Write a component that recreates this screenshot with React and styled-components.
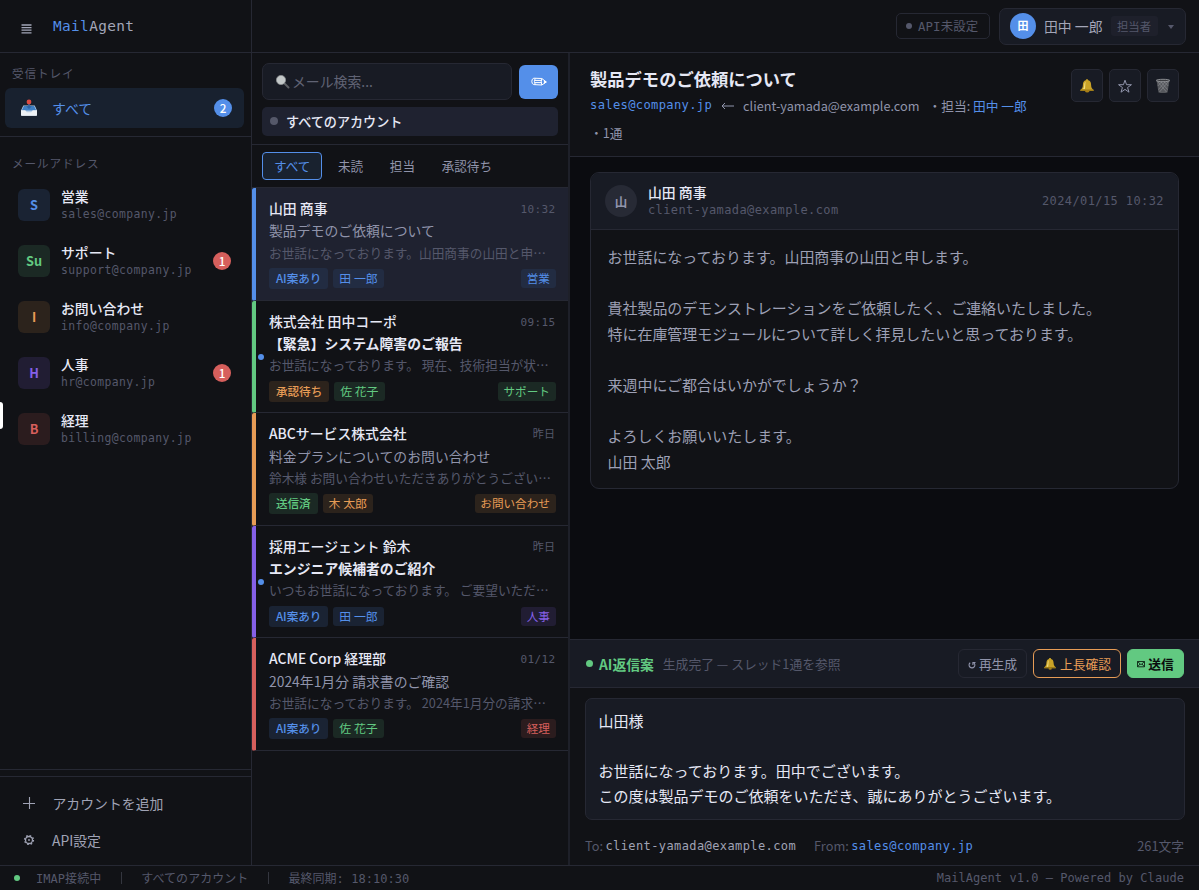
import React from 'react';
import styled, { createGlobalStyle, css } from 'styled-components';

const c = {
  bg: '#0b0c10',
  surface: '#111216',
  raised: '#181b24',
  active: '#1f2230',
  line: '#262833',
  text: '#e6e8f5',
  soft: '#9094ab',
  dim: '#55586b',
  blue: '#548fe9',
  green: '#62c981',
  orange: '#e79c56',
  purple: '#8560e8',
  red: '#d65f5c',
};

const tint = {
  blue: { fg: c.blue, bg: '#1a2333' },
  green: { fg: c.green, bg: '#1b2924' },
  orange: { fg: c.orange, bg: '#2c231c' },
  purple: { fg: c.purple, bg: '#211d33' },
  red: { fg: c.red, bg: '#2b1c1e' },
};

const Global = createGlobalStyle`
  * { box-sizing: border-box; }
  html, body { margin: 0; height: 100%; background: ${c.bg}; }
  body { font-family: "Noto Sans CJK JP", "Noto Sans", sans-serif; color: ${c.text}; overflow: hidden; font-size: 13.86px; }
  button { font: inherit; color: inherit; margin: 0; padding: 0; border: 0; background: none; }
`;

const mono = css`
  font-family: "DejaVu Sans Mono", "Noto Sans CJK JP", monospace;
  letter-spacing: ${(p) => p.$ls ?? 0.4}px;
`;

const Shell = styled.div`
  width: 1199px;
  height: 890px;
  display: grid;
  grid-template-rows: 53px 812px 25px;
  position: relative;
  background: ${c.surface};
  white-space: nowrap;
`;

const EdgeHandle = styled.div`
  position: absolute;
  left: 0;
  top: 402px;
  width: 3px;
  height: 27px;
  background: #fff;
  border-radius: 0 3px 3px 0;
`;

/* top bar */
const TopBar = styled.header`
  display: flex;
  align-items: stretch;
  border-bottom: 1px solid ${c.line};
`;
const Brand = styled.div`
  width: 252px;
  border-right: 1px solid ${c.line};
  display: flex;
  align-items: center;
  padding-left: 21px;
`;
const MenuIcon = styled.svg`
  width: 11px;
  height: 10px;
  margin-top: 5px;
`;
const Logo = styled.div`
  ${mono}
  font-size: 14.4px;
  line-height: 20px;
  margin-left: 21px;
  color: #a3a6b8;
  span { color: ${c.blue}; }
`;
const TopActions = styled.div`
  flex: 1;
  display: flex;
  align-items: center;
  justify-content: flex-end;
  gap: 9px;
  padding-right: 13px;
`;
const ApiBadge = styled.div`
  ${mono}
  display: flex;
  align-items: center;
  gap: 6px;
  width: 94px;
  height: 26px;
  padding-left: 9px;
  border: 1px solid ${c.line};
  border-radius: 5px;
  font-size: 12.4px;
  color: ${c.dim};
`;
const Dot = styled.i`
  flex: none;
  display: block;
  width: ${(p) => p.$s}px;
  height: ${(p) => p.$s}px;
  border-radius: 50%;
  background: ${(p) => p.$c};
`;
const UserMenu = styled.button`
  display: flex;
  align-items: center;
  width: 187px;
  height: 37px;
  padding: 0 10px;
  border: 1px solid ${c.line};
  border-radius: 7px;
  background: ${c.raised};
`;
const UserAvatar = styled.span`
  width: 26px;
  height: 26px;
  border-radius: 50%;
  background: ${c.blue};
  color: #fff;
  font-size: 11px;
  font-weight: 700;
  line-height: 25px;
  text-align: center;
`;
const UserName = styled.span`
  margin-left: 8px;
  color: #a3a6b8;
`;
const Role = styled.span`
  margin-left: 8px;
  width: 47px;
  height: 20px;
  line-height: 20px;
  text-align: center;
  border-radius: 3px;
  background: #1e202b;
  color: ${c.dim};
  font-size: 11.4px;
`;
const Caret = styled.i`
  margin-left: 10px;
  border: 3.5px solid transparent;
  border-top: 4px solid ${c.dim};
  border-bottom: 0;
  margin-top: 2px;
`;

const Main = styled.div`
  display: grid;
  grid-template-columns: 252px 318px 629px;
  min-height: 0;
`;

/* sidebar */
const Sidebar = styled.nav`
  border-right: 1px solid ${c.line};
  display: flex;
  flex-direction: column;
`;
const InboxGroup = styled.div`
  height: 84px;
  padding: 10px 7px 0 5px;
  border-bottom: 1px solid ${c.line};
`;
const GroupLabel = styled.div`
  font-size: 11.6px;
  line-height: 20px;
  letter-spacing: 0.9px;
  color: ${c.dim};
  padding-left: 7px;
`;
const InboxItem = styled.div`
  display: flex;
  align-items: center;
  height: 40px;
  margin-top: 5px;
  padding: 0 12px 0 15px;
  border-radius: 6px;
  background: #18212f;
  color: ${c.blue};
  svg { width: 18px; height: 18px; }
  span { margin-left: 14px; flex: 1; }
`;
const Count = styled.b`
  width: 18px;
  height: 18px;
  border-radius: 9px;
  background: ${(p) => p.$c};
  color: #fff;
  font-size: 11.7px;
  font-weight: 500;
  line-height: 17px;
  text-align: center;
`;
const Accounts = styled.div`
  flex: 1;
  padding: 16px 5px 0;
`;
const Account = styled.div`
  display: flex;
  align-items: center;
  height: 56px;
  padding: 0 15px 0 13px;
`;
const AccountList = styled.div`
  margin-top: 4px;
`;
const Tile = styled.span`
  width: 32px;
  height: 32px;
  border-radius: 6px;
  background: ${(p) => tint[p.$t].bg};
  color: ${(p) => tint[p.$t].fg};
  font-size: 12.75px;
  font-weight: 700;
  line-height: 32px;
  text-align: center;
`;
const AccountText = styled.div`
  flex: 1;
  margin-left: 11px;
  font-weight: 500;
  line-height: 17px;
`;
const Address = styled.div`
  ${mono}
  font-weight: 400;
  font-size: ${(p) => p.$fs ?? 11.4}px;
  line-height: 16px;
  padding-top: 1px;
  color: ${c.dim};
`;
const SideFooter = styled.div`
  height: 96px;
  border-top: 1px solid ${c.line};
  padding-top: 6px;
`;
const FooterInner = styled.div`
  border-top: 1px solid ${c.line};
  padding-top: 7px;
`;
const FooterLink = styled.div`
  display: flex;
  align-items: center;
  height: 37px;
  padding-left: 22px;
  color: #a0a3b5;
  svg { width: 14px; height: 14px; margin-right: ${(p) => p.$gap}px; }
`;

/* message list */
const ListPane = styled.section`
  border-right: 2px solid #1e2029;
`;
const SearchArea = styled.div`
  height: 92px;
  padding: 10px 10px 0;
  border-bottom: 1px solid ${c.line};
`;
const SearchRow = styled.div`
  display: flex;
  align-items: center;
  gap: 7px;
`;
const Search = styled.div`
  width: 250px;
  height: 37px;
  display: flex;
  align-items: center;
  padding: 0 0 1px 12px;
  border: 1px solid ${c.line};
  border-radius: 7px;
  background: ${c.raised};
  color: #606374;
  svg { width: 15px; height: 15px; margin-right: 2px; }
`;
const Compose = styled.button`
  width: 39px;
  height: 34px;
  border-radius: 6px;
  background: ${c.blue};
  display: grid;
  place-items: center;
  svg { width: 16px; height: 12px; }
`;
const AccountFilter = styled.div`
  display: flex;
  align-items: center;
  gap: 8px;
  height: 29px;
  width: 296px;
  margin-top: 7px;
  padding: 0 0 1px 8px;
  border-radius: 5px;
  background: ${c.active};
  font-size: 13.1px;
  font-weight: 500;
`;
const Tabs = styled.div`
  display: flex;
  align-items: center;
  height: 43px;
  padding-left: 10px;
  border-bottom: 1px solid ${c.line};
`;
const Tab = styled.button`
  height: 28px;
  line-height: 23px;
  padding: 0 ${(p) => (p.$on ? 11 : 12)}px 2px;
  margin-right: ${(p) => (p.$on ? 2.5 : 0.7)}px;
  border-radius: 4px;
  font-size: 12.6px;
  color: ${(p) => (p.$on ? c.blue : c.soft)};
  border: 1px solid ${(p) => (p.$on ? c.blue : 'transparent')};
  background: ${(p) => (p.$on ? '#19222f' : 'none')};
`;
const Mail = styled.article`
  position: relative;
  height: 112.6px;
  padding: 10px 12.5px 0 13px;
  border-left: 4px solid ${(p) => tint[p.$t].fg};
  border-bottom: 1px solid ${c.line};
  border-radius: 2px 0 0 2px;
  background: ${(p) => (p.$on ? c.active : 'none')};
`;
const UnreadDot = styled.i`
  position: absolute;
  left: 2px;
  top: 53px;
  width: 6px;
  height: 6px;
  border-radius: 50%;
  background: ${c.blue};
`;
const MailTop = styled.div`
  display: flex;
  justify-content: space-between;
  line-height: 21.4px;
  font-weight: 500;
`;
const MailTime = styled.time`
  ${mono}
  font-size: 11px;
  line-height: 23px;
  height: 21.4px;
  font-weight: 400;
  color: ${c.dim};
`;
const Subject = styled.div`
  line-height: 23.2px;
  color: ${(p) => (p.$unread ? c.text : c.soft)};
  font-weight: ${(p) => (p.$unread ? 700 : 400)};
`;
const Preview = styled.div`
  font-size: 12.7px;
  line-height: 20px;
  color: ${c.dim};
`;
const Tags = styled.div`
  display: flex;
  align-items: center;
  gap: 5px;
  margin-top: 5.4px;
`;
const Tag = styled.span`
  height: ${(p) => (p.$strong ? 21 : 19)}px;
  line-height: ${(p) => (p.$strong ? 20 : 18)}px;
  padding: 0 ${(p) => (p.$end ? 5.6 : p.$strong ? 6.9 : 6)}px;
  border-radius: 3px;
  font-size: ${(p) => (p.$strong ? 11.6 : p.$end ? 11.6 : 11.9)}px;
  font-weight: ${(p) => (p.$strong ? 500 : 400)};
  color: ${(p) => tint[p.$t].fg};
  background: ${(p) => (p.$lit ? '#222c42' : tint[p.$t].bg)};
  margin-left: ${(p) => (p.$end ? 'auto' : 0)};
`;

/* reading pane */
const Reader = styled.section`
  display: flex;
  flex-direction: column;
  background: ${c.bg};
`;
const ReaderHead = styled.div`
  display: flex;
  justify-content: space-between;
  height: 104px;
  padding: 12px 20px 0 20px;
  background: ${c.surface};
  border-bottom: 1px solid ${c.line};
`;
const Title = styled.h1`
  margin: 0;
  font-size: 17.3px;
  line-height: 27px;
  font-weight: 700;
`;
const Route = styled.div`
  display: flex;
  align-items: center;
  font-size: 12.72px;
  line-height: 27px;
  color: ${c.soft};
  b { font-weight: 400; color: ${c.blue}; }
`;
const RouteFrom = styled.span`
  ${mono}
  font-size: 12.1px;
  color: ${c.blue};
`;
const Arrow = styled.svg`
  width: 13px;
  height: 8px;
  margin: 0 9px;
`;
const Assignee = styled.span`
  margin-left: 9px;
`;
const HeadButtons = styled.div`
  display: flex;
  gap: 6px;
  padding-top: 4px;
`;
const IconButton = styled.button`
  width: 32px;
  height: 33px;
  border: 1px solid ${c.line};
  border-radius: 5px;
  background: ${c.raised};
  display: grid;
  place-items: center;
  svg { width: 16px; height: 16px; }
`;
const Thread = styled.div`
  flex: 1;
  padding: 15px 20px;
`;
const Card = styled.div`
  width: 589px;
  height: 317px;
  border: 1px solid ${c.line};
  border-radius: 9px;
  background: ${c.surface};
  overflow: hidden;
`;
const CardHead = styled.div`
  display: flex;
  align-items: center;
  height: 57px;
  padding: 0 14px;
  background: ${c.raised};
  border-bottom: 1px solid ${c.line};
`;
const Round = styled.span`
  width: 32px;
  height: 32px;
  border-radius: 50%;
  background: #272a35;
  color: ${c.soft};
  font-size: 12.5px;
  font-weight: 700;
  line-height: 33px;
  text-align: center;
`;
const Stamp = styled.time`
  ${mono}
  font-size: 12px;
  color: ${c.dim};
`;
const Body = styled.div`
  padding: 14px 16.5px;
  font-size: 14.98px;
  line-height: 25.6px;
  color: #9da0b5;
  white-space: pre;
`;

/* reply composer */
const Composer = styled.div`
  height: 226px;
  background: ${c.surface};
  border-top: 1px solid ${c.line};
`;
const ComposerHead = styled.div`
  display: flex;
  align-items: center;
  height: 48px;
  padding: 0 15px 0 16px;
  background: ${c.raised};
  border-bottom: 1px solid ${c.line};
`;
const AiTitle = styled.b`
  margin-left: 6px;
  font-size: 13.8px;
  font-weight: 700;
  color: ${c.green};
`;
const AiState = styled.span`
  flex: 1;
  margin-left: 9px;
  font-size: 12.8px;
  color: ${c.dim};
`;
const Action = styled.button`
  display: flex;
  align-items: center;
  justify-content: center;
  gap: 3px;
  width: ${(p) => p.$w}px;
  height: 29px;
  margin-left: 6px;
  border-radius: 6px;
  font-size: 12.75px;
  font-weight: ${(p) => p.$weight ?? 400};
  color: ${(p) => p.$fg};
  border: 1px solid ${(p) => p.$line};
  background: ${(p) => p.$bg ?? 'transparent'};
`;
const Draft = styled.div`
  margin: 10px 14px 0 15px;
  height: 122px;
  padding: 9px 12.5px;
  border: 1px solid ${c.line};
  border-radius: 7px;
  background: ${c.raised};
  font-size: 15px;
  line-height: 25px;
  white-space: pre;
`;
const DraftMeta = styled.div`
  display: flex;
  align-items: center;
  margin-top: 14px;
  padding: 0 15px;
  line-height: 24px;
  font-size: 12.75px;
  color: ${c.dim};
`;
const MetaMail = styled.span`
  ${mono}
  font-size: 12px;
  margin: 0 18px 0 2.5px;
  color: ${(p) => p.$c};
`;
const Chars = styled.span`
  margin-left: auto;
`;

const StatusBar = styled.footer`
  ${mono}
  display: flex;
  align-items: center;
  border-top: 1px solid ${c.line};
  padding: 0 15px 1px 14px;
  font-size: 12px;
  color: ${c.dim};
`;
const StatusText = styled.span`
  &:first-of-type { margin-left: 16px; }
  &:last-of-type { margin-left: auto; }
`;
const Sep = styled.i`
  width: 1px;
  height: 12px;
  margin: 0 19.5px;
  background: #34363f;
`;

const Bell = () => (
  <svg viewBox="0 0 16 16">
    <path d="M8 1.2c.8 0 1.2.5 1.2 1.1 2 .5 2.8 2.2 2.9 4.4.1 2.500.6 3.600 2.300 5 .5.400.4 1.200-.3 1.200H1.900c-.7 0-.8-.8-.3-1.200 1.700-1.400 2.200-2.500 2.300-5 .1-2.200.9-3.900 2.900-4.400 0-.6.4-1.100 1.200-1.100z" fill="#c9a227" />
    <path d="M6.600 3.400c-1 .9-1.300 2.400-1.400 4-.1 1.400-.5 2.600-1.200 3.600h1.900c.5-1.900.2-5.400.7-7.600z" fill="#f1de84" />
    <path d="M1.500 12.200h13" stroke="#8f6f14" strokeWidth="1.100" />
    <ellipse cx="8.200" cy="13.300" rx="1.900" ry="1.300" fill="#a87f18" />
  </svg>
);
const Star = () => (
  <svg viewBox="0 0 16 16">
    <path d="M8 2.200l1.550 4.500h4.900l-3.900 2.850 1.450 4.650L8 11.400l-4 2.800 1.450-4.650-3.900-2.850h4.900z" fill="none" stroke={c.soft} strokeWidth="1" />
  </svg>
);
const Trash = () => (
  <svg viewBox="0 0 16 16">
    <path d="M1.500 2.200h13l-2 12.300q-4.500 1.200-9 0z" fill="#55575c" />
    <path d="M3 4l8.500 10M6 4l6.500 7.500M9.500 4l3.700 4M13 4L4.500 14M10 4l-6.500 7.500M6.500 4L2.800 8" stroke="#8d8f93" strokeWidth=".6" />
    <ellipse cx="8" cy="2.500" rx="6.800" ry="1.200" fill="#3b3c40" stroke="#a0a2a6" strokeWidth=".8" />
  </svg>
);
const Inbox = () => (
  <svg viewBox="0 0 18 18">
    <path d="M3.300 6.500h11.400l2.300 5v4.500q0 .8-.8.8H1.800q-.8 0-.8-.8v-4.500z" fill="#b9cfe6" />
    <path d="M3.800 7h10.400l2 4.500H1.800z" fill="#3f7fc4" />
    <path d="M1 11.300h4.200l1.600 2h4.400l1.600-2H17V16q0 .8-.8.8H1.800Q1 16.800 1 16z" fill="#eef1f5" />
    <path d="M8.200 3h1.600v4.200h2L9 10 6.200 7.200h2z" fill="#2d64a5" />
    <circle cx="9" cy="3" r="2.400" fill="#dc4a41" />
  </svg>
);
const Magnifier = () => (
  <svg viewBox="0 0 15 15">
    <path d="M9 9l4.500 4.500" stroke="#5d5f64" strokeWidth="2" strokeLinecap="round" />
    <circle cx="6" cy="6" r="4.600" fill="#c3c8c8" stroke="#8c8f92" strokeWidth=".8" />
  </svg>
);
const Pencil = () => (
  <svg viewBox="0 0 16 12" fill="none" stroke="#fff" strokeWidth="1" strokeLinejoin="round">
    <path d="M2.800 2.200L10.800 2.500 15.300 6 10.800 9 2.800 8.600Q.8 8 .8 5.400T2.800 2.200zM4.200 2.300Q2.600 5.400 4.200 8.600M4 4.400h6.600M4 6.600h6.600M10.800 2.500Q9.600 6 10.800 9" />
    <path d="M13.400 4.800L15.200 6l-1.800 1.200z" fill="#fff" />
  </svg>
);
const Plus = () => (
  <svg viewBox="0 0 14 14">
    <path d="M1 7.500h12M7.500 1v12" stroke="#a0a3b5" strokeWidth="1.100" />
  </svg>
);
const Gear = () => (
  <svg viewBox="0 0 14 14" fill="none" stroke="#a0a3b5">
    <circle cx="7" cy="7" r="3.500" strokeWidth="1.300" />
    <circle cx="7" cy="7" r="4.500" strokeWidth="1.200" strokeDasharray="1.700 1.834" />
    <circle cx="7" cy="7" r=".9" fill="#a0a3b5" stroke="none" />
  </svg>
);
const Redo = () => (
  <svg width="8" height="10" viewBox="0 0 8 10" fill="none" stroke={c.soft} strokeWidth="1.100">
    <path d="M2.200 3.700A2.900 2.900 0 1 0 5.600 3.600M4.900 6V3.500h2.600" />
  </svg>
);
const Envelope = () => (
  <svg width="8" height="8" viewBox="0 0 8 8" fill="none" stroke="#0d2415" strokeWidth=".9">
    <path d="M.5 1.500h7v5.300h-7zM.5 1.500L4 4.700l3.500-3.200M.5 6.800L3 4M7.500 6.800L5 4" />
  </svg>
);

const accounts = [
  ['S', 'blue', '営業', 'sales@company.jp'],
  ['Su', 'green', 'サポート', 'support@company.jp', 1],
  ['I', 'orange', 'お問い合わせ', 'info@company.jp'],
  ['H', 'purple', '人事', 'hr@company.jp', 1],
  ['B', 'red', '経理', 'billing@company.jp'],
];

const mails = [
  { t: 'blue', on: true, from: '山田 商事', time: '10:32', subject: '製品デモのご依頼について', preview: 'お世話になっております。山田商事の山田と申…', tags: [['AI案あり', 'blue'], ['田 一郎', 'blue'], ['営業', 'blue']] },
  { t: 'green', unread: true, from: '株式会社 田中コーポ', time: '09:15', subject: '【緊急】システム障害のご報告', preview: 'お世話になっております。 現在、技術担当が状…', tags: [['承認待ち', 'orange'], ['佐 花子', 'green'], ['サポート', 'green']] },
  { t: 'orange', from: 'ABCサービス株式会社', time: '昨日', subject: '料金プランについてのお問い合わせ', preview: '鈴木様 お問い合わせいただきありがとうござい…', tags: [['送信済', 'green'], ['木 太郎', 'orange'], ['お問い合わせ', 'orange']] },
  { t: 'purple', unread: true, from: '採用エージェント 鈴木', time: '昨日', subject: 'エンジニア候補者のご紹介', preview: 'いつもお世話になっております。 ご要望いただ…', tags: [['AI案あり', 'blue'], ['田 一郎', 'blue'], ['人事', 'purple']] },
  { t: 'red', from: 'ACME Corp 経理部', time: '01/12', subject: '2024年1月分 請求書のご確認', preview: 'お世話になっております。 2024年1月分の請求…', tags: [['AI案あり', 'blue'], ['佐 花子', 'green'], ['経理', 'red']] },
];

const message = `お世話になっております。山田商事の山田と申します。

貴社製品のデモンストレーションをご依頼したく、ご連絡いたしました。
特に在庫管理モジュールについて詳しく拝見したいと思っております。

来週中にご都合はいかがでしょうか？

よろしくお願いいたします。
山田 太郎`;

const draft = `山田様

お世話になっております。田中でございます。
この度は製品デモのご依頼をいただき、誠にありがとうございます。`;

export default function App() {
  return (
    <Shell>
      <Global />
      <TopBar>
        <Brand>
          <MenuIcon viewBox="0 0 11 10">
            <path d="M.5 1h10M.5 3.600h10M.5 6.200h10M.5 8.800h10" stroke="#a3a6b8" strokeWidth="1.300" />
          </MenuIcon>
          <Logo $ls={0.37}><span>Mail</span>Agent</Logo>
        </Brand>
        <TopActions>
          <ApiBadge $ls={0.1}><Dot $s={6} $c={c.dim} />API未設定</ApiBadge>
          <UserMenu>
            <UserAvatar>田</UserAvatar>
            <UserName>田中 一郎</UserName>
            <Role>担当者</Role>
            <Caret />
          </UserMenu>
        </TopActions>
      </TopBar>

      <Main>
        <Sidebar>
          <InboxGroup>
            <GroupLabel>受信トレイ</GroupLabel>
            <InboxItem><Inbox /><span>すべて</span><Count $c={c.blue}>2</Count></InboxItem>
          </InboxGroup>
          <Accounts>
            <GroupLabel>メールアドレス</GroupLabel>
            <AccountList>
              {accounts.map(([mark, t, name, mail, n]) => (
                <Account key={mark}>
                  <Tile $t={t}>{mark}</Tile>
                  <AccountText>{name}<Address>{mail}</Address></AccountText>
                  {n && <Count $c={c.red}>{n}</Count>}
                </Account>
              ))}
            </AccountList>
          </Accounts>
          <SideFooter>
            <FooterInner>
              <FooterLink $gap={16.5}><Plus />アカウントを追加</FooterLink>
              <FooterLink $gap={16}><Gear />API設定</FooterLink>
            </FooterInner>
          </SideFooter>
        </Sidebar>

        <ListPane>
          <SearchArea>
            <SearchRow>
              <Search><Magnifier />メール検索...</Search>
              <Compose><Pencil /></Compose>
            </SearchRow>
            <AccountFilter><Dot $s={8} $c="#555869" />すべてのアカウント</AccountFilter>
          </SearchArea>
          <Tabs>
            <Tab $on>すべて</Tab>
            <Tab>未読</Tab>
            <Tab>担当</Tab>
            <Tab>承認待ち</Tab>
          </Tabs>
          {mails.map((m) => (
            <Mail key={m.from} $t={m.t} $on={m.on}>
              {m.unread && <UnreadDot />}
              <MailTop>{m.from}<MailTime>{m.time}</MailTime></MailTop>
              <Subject $unread={m.unread}>{m.subject}</Subject>
              <Preview>{m.preview}</Preview>
              <Tags>
                {m.tags.map(([label, t], i) => (
                  <Tag key={label} $t={t} $strong={i === 0} $end={i === 2} $lit={m.on}>{label}</Tag>
                ))}
              </Tags>
            </Mail>
          ))}
        </ListPane>

        <Reader>
          <ReaderHead>
            <div>
              <Title>製品デモのご依頼について</Title>
              <Route>
                <RouteFrom $ls={0.35}>sales@company.jp</RouteFrom>
                <Arrow viewBox="0 0 13 8"><path d="M13 4H1M4 1L1 4l3 3" fill="none" stroke={c.soft} /></Arrow>
                client-yamada@example.com
                <Assignee>・担当: <b>田中 一郎</b></Assignee>
              </Route>
              <Route>・1通</Route>
            </div>
            <HeadButtons>
              <IconButton><Bell /></IconButton>
              <IconButton><Star /></IconButton>
              <IconButton><Trash /></IconButton>
            </HeadButtons>
          </ReaderHead>
          <Thread>
            <Card>
              <CardHead>
                <Round>山</Round>
                <AccountText>山田 商事<Address $fs={12}>client-yamada@example.com</Address></AccountText>
                <Stamp>2024/01/15 10:32</Stamp>
              </CardHead>
              <Body>{message}</Body>
            </Card>
          </Thread>
          <Composer>
            <ComposerHead>
              <Dot $s={7} $c={c.green} />
              <AiTitle>AI返信案</AiTitle>
              <AiState>生成完了 — スレッド1通を参照</AiState>
              <Action $w={69} $fg={c.soft} $line={c.line}><Redo />再生成</Action>
              <Action $w={88} $fg={c.orange} $line={c.orange}>
                <svg width="14" height="14" viewBox="0 0 16 16"><Bell /></svg>上長確認
              </Action>
              <Action $w={57} $fg="#0a0c0d" $line={c.green} $bg={c.green} $weight={700}><Envelope />送信</Action>
            </ComposerHead>
            <Draft>{draft}</Draft>
            <DraftMeta>
              To:<MetaMail $c="#a0a3b5">client-yamada@example.com</MetaMail>
              From:<MetaMail $c={c.blue}>sales@company.jp</MetaMail>
              <Chars>261文字</Chars>
            </DraftMeta>
          </Composer>
        </Reader>
      </Main>

      <StatusBar $ls={0.05}>
        <Dot $s={6} $c={c.green} />
        <StatusText>IMAP接続中</StatusText>
        <Sep />
        <StatusText>すべてのアカウント</StatusText>
        <Sep />
        <StatusText>最終同期: 18:10:30</StatusText>
        <StatusText>MailAgent v1.0 — Powered by Claude</StatusText>
      </StatusBar>
      <EdgeHandle />
    </Shell>
  );
}
